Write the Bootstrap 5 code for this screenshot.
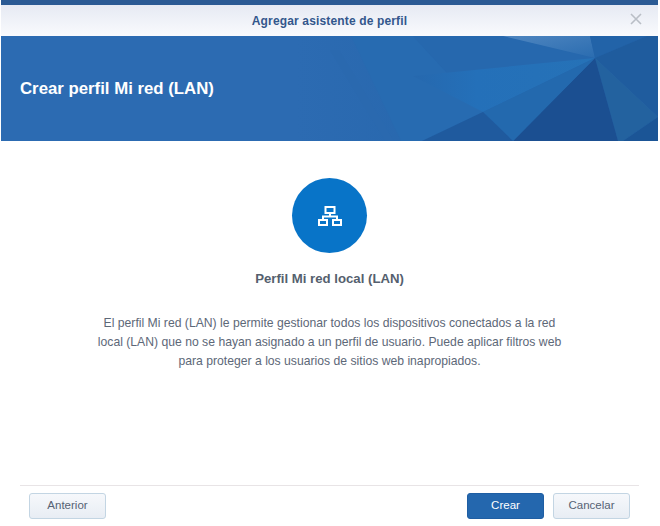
<!DOCTYPE html>
<html lang="es">
<head>
  <meta charset="UTF-8">
  <title>Agregar asistente de perfil</title>
  <link href="https://cdn.jsdelivr.net/npm/bootstrap@5.3.3/dist/css/bootstrap.min.css" rel="stylesheet">
  <style>
    html, body { height: 526px; overflow: hidden; }
    body { background: #fff; font-family: "Liberation Sans", Arial, sans-serif; color: #4f5a6b; }
    .wiz-window { width: 657px; height: 526px; margin-left: 1px; border-top: 5px solid #2b5a94; background: #fff; }
    .wiz-titlebar { height: 31px; background: linear-gradient(#e6eaf3, #f9fafd); color: #33578c; font-size: 12px; font-weight: 700; letter-spacing: .15px; }
    .wiz-close { position: absolute; right: 16px; top: 8px; width: 12px; height: 12px; padding: 0; border: 0; background: none; line-height: 0; }
    .wiz-banner { height: 105px; background: linear-gradient(90deg, #2c6bb2 0, #2c6bb2 45%, #2767ad 70%); }
    .wiz-banner svg { position: absolute; inset: 0; }
    .wiz-banner h1 { position: relative; margin: 2px 0 0 19px; color: #fff; font-size: 16.8px; font-weight: 700; }
    .wiz-body { height: 344px; padding-top: 37px; }
    .wiz-circle { width: 75px; height: 75px; background: #0874c8; }
    .wiz-subtitle { margin: 17px 0 0; font-size: 13.2px; font-weight: 700; color: #555f6e; line-height: 18px; }
    .wiz-text { width: 470px; margin: 26px 0 0; font-size: 12.2px; line-height: 19px; color: #5d6878; }
    .wiz-footer { margin: 0 19px; height: 41px; border-top: 1px solid #e8e4e6; padding: 7px 9px 0 9px; }
    .wiz-btn { width: 77px; height: 26px; padding: 0; font-size: 11.5px; border-radius: 3px; border: 1px solid #c3d5e3; color: #566274; background: linear-gradient(#f6f8fb, #e8edf4); }
    .wiz-btn-primary { border-color: #1f5ea3; color: #fff; background: #2467ae; }
    .wiz-btn-gap { margin-left: 9px; }
  </style>
</head>
<body>
  <div class="wiz-window d-flex flex-column">
    <div class="wiz-titlebar position-relative d-flex align-items-center justify-content-center">
      <span>Agregar asistente de perfil</span>
      <button class="wiz-close" type="button" aria-label="Cerrar">
        <svg width="12" height="12" viewBox="0 0 12 12"><path d="M1 1l10 10M11 1L1 11" stroke="#b9bec6" stroke-width="1.6" fill="none"/></svg>
      </button>
    </div>

    <div class="wiz-banner position-relative d-flex align-items-center overflow-hidden">
      <!-- coordinates are page x minus 1, page y minus 36 -->
      <svg width="657" height="105" viewBox="0 0 657 105">
        <defs>
          <linearGradient id="wizGlow" x1="0" y1="0" x2="1" y2="0">
            <stop offset="0" stop-color="#2668ae"/>
            <stop offset=".35" stop-color="#2470b9"/>
            <stop offset="1" stop-color="#2672b7"/>
          </linearGradient>
          <linearGradient id="wizTop" x1="0" y1="0" x2="1" y2="1">
            <stop offset="0" stop-color="#4f86c0"/>
            <stop offset="1" stop-color="#2a6cb0"/>
          </linearGradient>
        </defs>
        <polygon points="329,14 338,14 393,105 384,105" fill="#2a69af"/>
        <polygon points="350,0 412,0 482,76 421,105 400,105" fill="#276bb1"/>
        <polygon points="412,0 502,0 594,22 482,76" fill="#2668ae"/>
        <polygon points="412,40 594,22 482,76" fill="url(#wizGlow)"/>
        <polygon points="502,0 589,0 594,22" fill="url(#wizTop)"/>
        <polygon points="589,0 646,0 594,22" fill="#2263a8"/>
        <polygon points="646,0 657,0 657,81 594,22" fill="#1f5c9e"/>
        <polygon points="594,22 657,81 622,105 617,105" fill="#23629f"/>
        <polygon points="594,22 617,105 512,105" fill="#1b4f91"/>
        <polygon points="594,22 512,105 482,76" fill="#2369ae"/>
        <polygon points="482,76 512,105 421,105" fill="#1f5a9e"/>
        <polygon points="657,81 657,105 622,105" fill="#1b5596"/>
      </svg>
      <h1>Crear perfil Mi red (LAN)</h1>
    </div>

    <div class="wiz-body d-flex flex-column align-items-center text-center">
      <div class="wiz-circle rounded-circle d-flex align-items-center justify-content-center flex-shrink-0">
        <svg width="24" height="20" viewBox="0 0 24 20" fill="none" stroke="#fff" stroke-width="2">
          <rect x="7.5" y="1" width="9" height="6"/>
          <path d="M12 7v3M5 14v-3.500h14V14"/>
          <rect x="1" y="14" width="8" height="5"/>
          <rect x="15" y="14" width="8" height="5"/>
        </svg>
      </div>
      <h2 class="wiz-subtitle">Perfil Mi red local (LAN)</h2>
      <p class="wiz-text">El perfil Mi red (LAN) le permite gestionar todos los dispositivos conectados a la red local (LAN) que no se hayan asignado a un perfil de usuario. Puede aplicar filtros web para proteger a los usuarios de sitios web inapropiados.</p>
    </div>

    <div class="wiz-footer d-flex">
      <button class="btn wiz-btn" type="button">Anterior</button>
      <button class="btn wiz-btn wiz-btn-primary ms-auto" type="button">Crear</button>
      <button class="btn wiz-btn wiz-btn-gap" type="button">Cancelar</button>
    </div>
  </div>
  <script src="https://cdn.jsdelivr.net/npm/bootstrap@5.3.3/dist/js/bootstrap.bundle.min.js"></script>
</body>
</html>
